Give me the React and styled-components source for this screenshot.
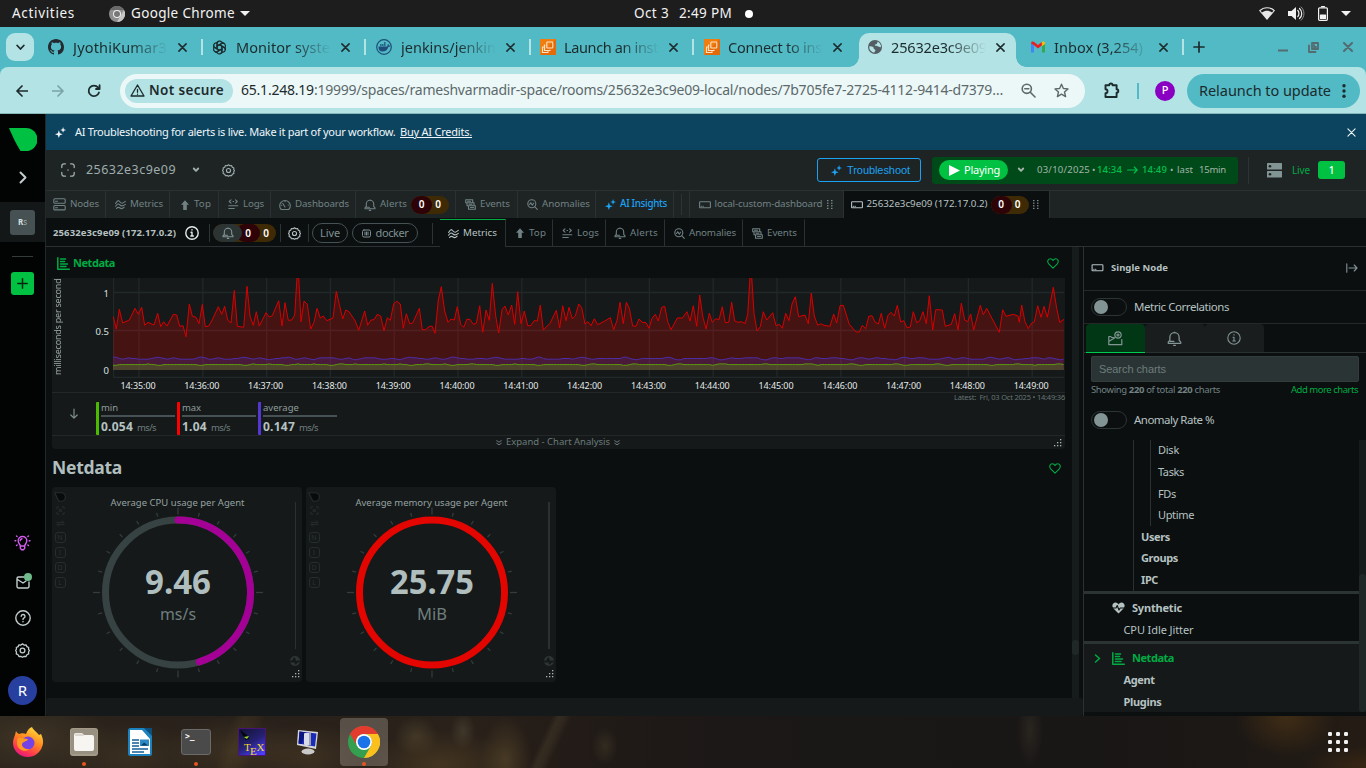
import React, { useLayoutEffect, useRef } from 'react';
import styled, { createGlobalStyle, css } from 'styled-components';

const Global = createGlobalStyle`
  * { box-sizing: border-box; }
  html, body { margin: 0; background: #0b0f10; }
  body { width: 1366px; height: 768px; overflow: hidden; font-family: "Noto Sans", "Open Sans", sans-serif; }
  svg { display: block; flex: none; }
`;

/* ---------- text ---------- */

const Label = styled.span`
  flex: none;
  display: inline-block;
  white-space: pre;
  line-height: 1.3;
  font-size: ${p => p.$s || 10}px;
  font-weight: ${p => p.$b || 400};
  color: ${p => p.$c || 'inherit'};
  margin-left: ${p => p.$ml || 0}px;
  ${p => p.$mb && css`margin-bottom: ${p.$mb}px;`}
  ${p => p.$sans && css`font-family: "Liberation Sans", sans-serif;`}
  ${p => p.$u && css`text-decoration: underline;`}
`;

/* Tracks its letters so that the run fills exactly w pixels. */
function Fit({ w, children, ...rest }) {
  const ref = useRef(null);
  useLayoutEffect(() => {
    const el = ref.current;
    const apply = () => {
      el.style.letterSpacing = '0px';
      const natural = el.getBoundingClientRect().width;
      const n = el.textContent.length;
      el.style.letterSpacing = (w - natural) / n + 'px';
    };
    apply();
    if (document.fonts) document.fonts.ready.then(apply);
  }, [w]);
  return <Label ref={ref} {...rest}>{children}</Label>;
}

/* ---------- icons ---------- */

const Svg = ({ w = 12, h, box = '0 0 24 24', sw = 2, fill = 'none', children, className }) => (
  <svg className={className} width={w} height={h || w} viewBox={box} fill={fill} stroke={fill === 'none' ? 'currentColor' : 'none'} strokeWidth={sw} strokeLinecap="round" strokeLinejoin="round">{children}</svg>
);
const Close = ({ w = 9, sw = 1.6 }) => <Svg w={w} box="0 0 10 10" sw={sw}><path d="M1 1l8 8M9 1l-8 8" /></Svg>;
const NodesIcon = () => <Svg w={13} box="0 0 13 13" sw={1.1}><rect x=".8" y=".8" width="11.4" height="4.4" rx="1" /><rect x=".8" y="7.5" width="11.4" height="4.4" rx="1" /><path d="M2.5 3.2h2M2.5 9.8h2" /></Svg>;
const MetricsIcon = () => <Svg w={11} box="0 0 11 11" sw={1.1}><path d="M.6 4.5C2.500 1 3.400 1 5 3s2.800 1.500 5.300-.6M.6 7.200C2.500 4.500 3.400 4.500 5 6s3 1.200 5.300-.6M1.500 9.500c1.500-1.800 2.300-1.500 3.600-.5s2.500.8 4-.8" /></Svg>;
const TopIcon = () => <Svg w={10} box="0 0 10 10" fill="currentColor"><path d="M5 .3L9 4.800H6.800V10H3.200V4.800H1z" /></Svg>;
const LogsIcon = () => <Svg w={11} box="0 0 11 11" sw={1.1}><path d="M3 .8L1.200 2.500 3 4.200M7.500.8L9.300 2.500 7.500 4.200M5 2.500h.6M.8 6.800h9M.8 9.500h5.500" /></Svg>;
const DashIcon = () => <Svg w={12} box="0 0 12 12" sw={1.1}><path d="M2.200 10.500A5.300 5.300 0 1 1 9.800 10.500zM6 8L3.800 4.500M6 2.500v.3M9.200 6h.2M2.500 6.300h.2" /></Svg>;
const Bell = ({ w = 12, sw = 1.1 }) => <Svg w={w} box="0 0 12 12" sw={sw}><path d="M1 9.800V8.900L2.300 7.400V5a3.700 3.700 0 0 1 7.400 0v2.400L11 8.900v.9zM2.600 8.300H5.500M5.300 11.400h1.400M5.700 1h.6" /></Svg>;
const EventsIcon = () => <Svg w={11} box="0 0 11 11" sw={1.1}><path d="M.7.7h7v3h-7zM2 3.700v3h7v-3H7.700M3.500 7v3.300h6.800V6.800H9M2.500 2.200h3M4 5.300h3M5.500 8.500h3" /></Svg>;
const AnomIcon = () => <Svg w={11} box="0 0 11 11" sw={1.1}><circle cx="4.800" cy="4.800" r="4" /><path d="M7.900 7.900l2.400 2.400M2.500 5.500l1.300-1.800 1.500 2.500 1.200-2" /></Svg>;
const Sparkle = ({ w = 11 }) => <Svg w={w} box="0 0 12 12" fill="currentColor"><path d="M4.200 3.500L5.300 6.700 8.400 7.800 5.300 8.900 4.200 12 3.100 8.900 0 7.800 3.100 6.700zM8.800 0l.8 2.400 2.400.8-2.400.8-.8 2.400L8 4l-2.200-.8L8 2.400z" /></Svg>;
const NodeIcon = ({ w = 12 }) => <Svg w={w} h={8} box="0 0 12 8" sw={1.1}><rect x=".6" y=".8" width="10.800" height="6" rx=".6" /><path d="M2.200 5.200h.4M4 5.200h.4" /></Svg>;
const Caret = ({ w = 8 }) => <Svg w={w} h={6} box="0 0 8 6" sw={1.9}><path d="M1.800 1.500L4 3.800l2.200-2.300" /></Svg>;
const Gear = ({ w = 14 }) => <Svg w={w} box="0 0 14 14" sw={1.2}><path d="M7 .8l1.500 1.100 1.800-.2.800 1.700 1.700.8-.2 1.800L13.500 7l-.9 1.400.2 1.800-1.700.8-.8 1.600-1.800-.1L7 13.300l-1.500-.8-1.800.1-.8-1.600-1.700-.8.2-1.800L.6 7l.8-1.400-.2-1.400 1.700-.8.800-1.700 1.800.2z" /><circle cx="7" cy="7" r="2.200" /></Svg>;
const Info = ({ w = 14, sw = 1.2 }) => <Svg w={w} box="0 0 14 14" sw={sw}><circle cx="7" cy="7" r="6.200" /><path d="M7 3.600v.4M6 6.300h1v3.500M5.800 10h2.600" /></Svg>;
const ChartIcon = () => <Svg w={13} box="0 0 13 13" sw={1.5}><path d="M.8.8v11.400h11.500M3.500 1.900h5M3.500 4.500h4M3.500 7h7M3.500 9.600h5.500" /></Svg>;
const Heart = () => <Svg w={12} h={11} box="0 0 13 12" sw={1.2}><path d="M6.500 11L1.800 6.300C-.5 3.500 1.500.8 3.600.8 5 .8 6 1.700 6.500 2.800 7 1.700 8 .8 9.400.8c2.100 0 4.100 2.700 1.800 5.500z" /></Svg>;
const Grip = () => <Svg w={6} h={9} box="0 0 6 9" fill="#7d8c8e">{[0, 2.600, 5.200, 7.800].map(y => <g key={y}><rect x="0" y={y} width="1.500" height="1.200" /><rect x="4" y={y} width="1.500" height="1.200" /></g>)}</Svg>;
const Corner = () => <Svg w={9} h={9} box="0 0 9 9" fill="#a9b5b5">{[[7, 0], [7, 3], [4, 3], [7, 6], [4, 6], [1, 6]].map(([x, y], i) => <rect key={i} x={x} y={y + 1} width="1.300" height="1.300" />)}</Svg>;
const Logo = ({ w, h, fill }) => <Svg w={w} h={h} box="0 0 28 23" fill={fill}><path d="M0 0h17a11.300 11.300 0 0 1 0 23h-5.500C7 16 3.500 8 0 0z" /></Svg>;

/* ---------- desktop frame ---------- */

const Screen = styled.div`width: 1366px; height: 768px; display: flex; flex-direction: column; overflow: hidden;`;
const TopBar = styled.div`
  height: 27px; flex: none; background: #1d1d1d; color: #f2f2f2; display: flex; align-items: center; padding-left: 12px;
`;
const Gap = styled.i`flex: none; width: ${p => p.$w || 1}px; height: ${p => p.$h || 1}px;`;
const ArrowDown = styled.i`flex: none; border: 5px solid transparent; border-top-color: #f2f2f2; border-bottom: 0; margin-left: ${p => p.$ml}px;`;
const Dot = styled.i`flex: none; width: 8px; height: 8px; border-radius: 50%; background: #fff; margin-left: 13px;`;

const TabStrip = styled.div`height: 40px; flex: none; background: #52bac5; display: flex; align-items: center; padding-left: 6px; color: #1c2b2d;`;
const TabSearch = styled.div`width: 28px; height: 28px; border-radius: 9px; background: #b3e3e5; display: grid; place-items: center; margin-right: 6px;`;
const BrowserTab = styled.div`
  position: relative; flex: none; width: ${p => p.$w}px; height: 40px; display: flex; align-items: center; padding-left: 8px;
  ${p => p.$on && css`
    &::before { content: ""; position: absolute; z-index: 0; left: 0; right: 6px; top: 6px; bottom: 0; background: #b3e3e5; border-radius: 10px 10px 0 0; }
    &::after { content: ""; position: absolute; z-index: 0; left: -10px; right: -4px; bottom: 0; height: 10px;
      background: radial-gradient(circle at 0 0, transparent 9.500px, #b3e3e5 10px) left / 10px 10px no-repeat, radial-gradient(circle at 100% 0, transparent 9.500px, #b3e3e5 10px) right / 10px 10px no-repeat; }
  `}
  > * { z-index: 1; }
`;
const TabTitle = styled.div`width: 98px; margin: 0 0 1px ${p => p.$ml || 9}px; -webkit-mask-image: linear-gradient(90deg, #000 58%, transparent 97%); mask-image: linear-gradient(90deg, #000 58%, transparent 97%);`;
const TabX = styled.div`margin-left: 7px; width: 9px;`;
const TabSep = styled.i`width: 2px; height: 16px; background: #b3e3e5; margin-left: 14px;`;

const Toolbar = styled.div`height: 47px; background: linear-gradient(#b3e3e5 46px, #86b6b9 46px); display: flex; align-items: center; padding-left: 16px; color: #1c2b2d; border-radius: 8px 8px 0 0;`;
const ToolbarWrap = styled.div`background: #52bac5; flex: none;`;
const Omnibox = styled.div`width: 965px; height: 34px; border-radius: 17px; background: #ecf8f8; margin-left: 18px; display: flex; align-items: center; padding-left: 5px; color: #5c696b;`;
const Chip = styled.div`width: 108px; height: 24px; border-radius: 12px; background: #b3e3e5; color: #1c2b2d; display: flex; align-items: center; padding-left: 5px; gap: 4px;`;
const ToolSep = styled.i`width: 2px; height: 16px; background: #52bac5; margin-left: 17px;`;
const Profile = styled.div`width: 20px; height: 20px; border-radius: 50%; background: #8a00c2; color: #fff; display: grid; place-items: center; margin-left: 16px;`;
const Relaunch = styled.div`width: 173px; height: 34px; border-radius: 17px; background: #52bac5; margin-left: 12px; padding-left: 12px; display: flex; align-items: center; gap: 11px;`;

/* ---------- app frame ---------- */

const Page = styled.div`height: 602px; flex: none; display: flex; overflow: hidden; background: #0b0f10;`;
const Side = styled.div`width: 46px; flex: none; background: #020404; border-right: 1px solid #23292a; display: flex; flex-direction: column; align-items: center; color: #c3cdcd; padding-top: 14px;`;
const SideIcon = styled.div`margin-top: ${p => p.$mt}px; color: ${p => p.$c || 'inherit'}; position: relative;`;
const SpaceRow = styled.div`width: 45px; height: 40px; background: #131717; margin-top: 18px; display: grid; place-items: center;`;
const Space = styled.div`width: 25px; height: 25px; border-radius: 3px; background: #455152; display: grid; place-items: center;`;
const SideLine = styled.i`width: 21px; height: 1px; background: #353b3b; margin-top: 14px;`;
const Plus = styled.div`width: 23px; height: 23px; border-radius: 3px; background: #00c142; color: #04250e; display: grid; place-items: center; margin-top: 15px;`;
const Avatar = styled.div`width: 29px; height: 29px; border-radius: 50%; background: #273f9f; color: #fff; display: grid; place-items: center; margin-top: 18px;`;
const MailBadge = styled.i`position: absolute; right: -1px; top: -1px; width: 8px; height: 8px; border-radius: 50%; background: #6fb98a;`;

const Body = styled.div`flex: none; width: 1320px; display: flex; flex-direction: column;`;
const Banner = styled.div`height: 36px; flex: none; background: #0c4460; color: #f1f6f8; display: flex; align-items: center; padding-left: 9px;`;
const HeaderRow = styled.div`height: 40px; flex: none; background: #1e2424; display: flex; align-items: center; padding-left: 15px; color: #9fadad;`;
const Trouble = styled.div`width: 104px; height: 24px; border: 1px solid #1da1f2; border-radius: 3px; color: #1da1f2; display: flex; align-items: center; padding-left: 13px; gap: 5px; margin-left: 582px;`;
const TimeBox = styled.div`width: 306px; height: 27px; border-radius: 3px; background: #004a1a; display: flex; align-items: center; margin-left: 11px; padding-left: 7px; color: #a3b5a8;`;
const Playing = styled.div`width: 69px; height: 20px; border-radius: 10px; background: #00c142; color: #fff; display: flex; align-items: center; padding-left: 10px; gap: 4px;`;
const HLine = styled.i`flex: none; width: 1px; height: ${p => p.$h || 27}px; background: #2d3435; margin-left: ${p => p.$ml || 0}px;`;
const LiveCount = styled.div`width: 27px; height: 18px; border-radius: 3px; background: #00c142; color: #fff; display: grid; place-items: center; margin-left: 8px;`;

const TabRow = styled.div`height: 28px; flex: none; background: #1e2424; border-top: 1px solid #2b3132; display: flex; color: #708183;`;
const SubRow = styled.div`height: 29px; flex: none; background: #0b0f10; border-bottom: 1px solid #2b3132; display: flex; align-items: center; padding: 2px 0 0 7px; color: #708183;`;
const SubTabs = styled.div`display: flex; height: 28px; margin-top: -1px;`;
const NavTab = styled.div`
  flex: none; height: 100%; width: ${p => p.$w}px; padding-left: ${p => p.$pl || 8}px; display: flex; align-items: center; gap: 4px; border-right: 1px solid #2b3132;
  ${p => p.$on && css`background: #0b0f10; color: #b6c2c2;`}
  ${p => p.$sub && css`border-top: 1px solid ${p.$on ? '#00ab44' : 'transparent'};`}
  ${p => p.$c && css`color: ${p.$c};`}
`;
const IconCell = styled.div`width: ${p => p.$w || 11}px; flex: none; display: grid; place-items: center;`;
const Counts = styled.div`flex: none; display: flex; height: 18px; width: ${p => p.$w || 38}px; border-radius: 9px; background: #3f2a06; color: #fff; align-items: center; overflow: hidden; margin-left: ${p => p.$ml || 0}px;`;
const Count = styled.div`flex: none; position: relative; z-index: ${p => p.$z || 0}; height: 18px; width: ${p => p.$w || 21}px; margin-left: ${p => p.$ml || 0}px; border-radius: 9px; background: ${p => p.$bg || 'transparent'}; display: grid; place-items: center;`;
const Pill = styled.div`width: ${p => p.$w}px; height: 20px; border: 1px solid #455152; border-radius: 10px; margin-left: ${p => p.$ml}px; display: flex; align-items: center; justify-content: center; gap: 5px; color: #7f8f91;`;

const Main = styled.div`flex: 1; display: flex; min-height: 0;`;
const Content = styled.div`width: 1026px; flex: none; height: 451px; overflow: hidden; padding-left: 6px;`;
const LeftPane = styled.div`width: 1037px; flex: none; display: flex; flex-wrap: wrap; align-content: flex-start;`;
const ScrollTrack = styled.div`width: 7px; height: 451px; background: #161b1b; padding-top: 393px; &::after { content: ""; display: block; height: 15px; border-radius: 3px; background: #1f2727; }`;
const BottomBand = styled.div`width: 1037px; height: 18px; background: #151919; border-radius: 3px;`;

const SectionHead = styled.div`height: ${p => p.$h}px; width: 1013px; display: flex; align-items: center; color: ${p => p.$c}; padding: ${p => p.$pt || 0}px ${p => p.$pr || 5}px 0 ${p => p.$pl || 0}px;`;
const Push = styled.i`flex: 1;`;
const ChartCard = styled.div`width: 1013px; height: 171px; background: #151919; border-radius: 0 0 4px 4px; display: flex; flex-direction: column;`;
const PlotRow = styled.div`height: 115px; flex: none; display: flex; border-bottom: 1px solid #222828;`;
const AxisTitle = styled.div`width: 12px; height: 97px; writing-mode: vertical-rl; transform: rotate(180deg); color: #9aa6a6; display: flex; align-items: center; line-height: 12px;`;
const VText = styled.span`font-size: 9px; line-height: 12px; white-space: nowrap; letter-spacing: -.22px;`;
const YAxis = styled.div`width: 49px; display: flex; flex-direction: column; align-items: flex-end; padding: 10px 4px 0 0; gap: 26px; color: #dbe1e1;`;
const PlotCol = styled.div`width: 952px;`;
const XAxis = styled.div`display: flex; gap: 28.800px; margin-left: 7.500px; height: 14px; color: #e4eaea; padding-top: 2px;`;
const LegendRow = styled.div`height: 43px; flex: none; border-bottom: 1px solid #222828; display: flex; padding: 9px 0 0 17px; color: #7d8c8c;`;
const Dim = styled.div`width: 78px; height: 33px; border-left: 3px solid ${p => p.$c}; border-radius: 1px; margin-right: 3px; padding-left: 2px; display: flex; flex-direction: column;`;
const DimBar = styled.i`height: 2px; width: 74px; background: #455152; margin: 1px 0 2px; flex: none;`;
const DimName = styled.div`height: 12px; padding-top: 1px; line-height: 11px; display: flex; align-items: center; color: #8f9d9d;`;
const DimVal = styled.div`height: 15px; display: flex; align-items: baseline; gap: 4px; color: #b6c2c2;`;
const Latest = styled.div`margin: -9px 0 0 auto; display: flex; align-items: flex-start; color: #657575;`;
const Expand = styled.div`flex: 1; display: flex; align-items: center; color: #6b7b7b; padding: 0 3px 0 444px; gap: 4px;`;

const Gauges = styled.div`display: flex; gap: 4px;`;
const GaugeCard = styled.div`width: 250px; height: 195px; background: #151919; border-radius: 4px; display: flex;`;
const Tools = styled.div`width: 14px; padding: 5px 0 0 2px; display: flex; flex-direction: column; gap: 4px; color: #293030; align-items: center;`;
const ToolBox = styled.div`width: 11px; height: 11px; border: 1px solid #262d2d; border-radius: 3px; display: grid; place-items: center; color: #2a3131;`;
const GaugeMain = styled.div`width: 223px; display: flex; flex-direction: column; align-items: center; padding-top: 9.500px; color: #96a3a3; > svg { margin-top: -3px; }`;
const GaugeSide = styled.div`width: 12px; display: flex; flex-direction: column; align-items: center; padding-top: 15px;`;
const VLine = styled.i`width: ${p => p.$w}px; height: 147px; background: #2a3131;`;
const NextTitle = styled.div`margin-top: 12.500px; display: flex; color: #b6c2c2;`;

const Panel = styled.div`width: 283px; flex: none; border-left: 1px solid #2b3132; display: flex; flex-direction: column; color: #b6c2c2;`;
const PanelHead = styled.div`height: 44px; flex: none; display: flex; align-items: center; padding: 0 8px 1px 7px; border-bottom: 1px solid #23292a;`;
const SwitchRow = styled.div`height: ${p => p.$h}px; flex: none; display: flex; align-items: center; padding: ${p => p.$pt || 0}px 0 0 7px; border-bottom: ${p => (p.$line ? '1px solid #23292a' : '0')};`;
const Toggle = styled.div`width: 36px; height: 18px; border: 1px solid #2c3434; border-radius: 9px; padding: 1px 2px; &::after { content: ""; display: block; width: 14px; height: 14px; border-radius: 50%; background: #829494; }`;
const PanelTabs = styled.div`height: 29px; flex: none; display: flex; padding-left: 2px; border-bottom: 1px solid #2b3132;`;
const PanelTab = styled.div`width: ${p => p.$w || 59}px; height: 29px; background: ${p => (p.$on ? '#023715' : '#191d1e')}; border-bottom: 1px solid ${p => (p.$on ? '#00cb51' : '#2b3132')}; border-radius: 4px 4px 0 0; display: grid; place-items: center; color: #829494; padding-right: 1px;`;
const Search = styled.div`width: 268px; height: 26px; flex: none; margin: 3px 0 0 7px; background: #2b3434; border: 1px solid #323c3c; border-radius: 2px; display: flex; align-items: center; padding-left: 7px; color: #6c7c7c;`;
const CountRow = styled.div`height: 16px; flex: none; width: 267px; margin-left: 7px; display: flex; align-items: center; justify-content: space-between; color: #728282;`;
const Menu = styled.div`display: flex; flex: none; height: 276px;`;
const MenuList = styled.div`width: 275px; display: flex; flex-direction: column;`;
const Outer = styled.div`margin-left: 49px; border-left: 1px solid #2b3132; height: 151px; padding-left: 7px;`;
const Inner = styled.div`margin-left: 9px; border-left: 1px solid #2b3132; height: 86px; padding-left: 7px;`;
const Item = styled.div`height: ${p => p.$h || 21.6}px; display: flex; align-items: center; padding-left: ${p => p.$pl || 0}px; gap: 7px; color: ${p => p.$c || 'inherit'};`;
const Chevron = styled.span`flex: none; width: 11px;`;
const Group = styled.div`border-top: 3px solid #2b3333; height: ${p => p.$h}px; padding-top: ${p => p.$pt}px; background: ${p => p.$bg || 'transparent'};`;
const MenuScroll = styled.div`width: 7px; background: #161b1b; padding-top: 134px; margin-bottom: 4px; &::after { content: ""; display: block; height: 138px; border-radius: 3px; background: #1f2727; }`;

const Dock = styled.div`
  height: 52px; flex: none; display: flex; align-items: center; padding-left: 4px; gap: 8px;
  background:
    linear-gradient(115deg, transparent 40%, rgba(84, 74, 50, .34) 47%, rgba(84, 74, 50, .26) 53%, transparent 60%) 512px 0 / 76px 52px no-repeat,
    linear-gradient(110deg, transparent 38%, rgba(100, 78, 42, .2) 47%, rgba(100, 78, 42, .16) 54%, transparent 62%) 180px 0 / 120px 52px no-repeat,
    radial-gradient(ellipse 22px 20px at 416px 20px, rgba(100, 88, 56, .4), transparent),
    radial-gradient(ellipse 13px 18px at 463px 15px, rgba(100, 94, 68, .36), transparent),
    radial-gradient(ellipse 26px 44px at 506px 44px, rgba(100, 82, 46, .5), transparent),
    radial-gradient(ellipse 76px 34px at 440px 48px, rgba(92, 72, 38, .5), transparent),
    radial-gradient(ellipse 13px 19px at 605px 30px, rgba(74, 68, 46, .4), transparent),
    radial-gradient(ellipse 13px 36px at 1030px 14px, rgba(56, 54, 40, .5), transparent),
    radial-gradient(ellipse 80px 40px at 32px 22px, rgba(90, 74, 50, .42), transparent),
    radial-gradient(ellipse 80px 34px at 130px 40px, rgba(82, 66, 40, .4), transparent),
    radial-gradient(ellipse 70px 34px at 235px 34px, rgba(88, 72, 44, .42), transparent),
    radial-gradient(ellipse 60px 34px at 310px 40px, rgba(90, 72, 42, .4), transparent),
    radial-gradient(ellipse 50px 38px at 1286px 2px, rgba(84, 56, 22, .6), transparent),
    radial-gradient(ellipse 60px 20px at 1366px 50px, rgba(76, 48, 20, .5), transparent),
    linear-gradient(90deg, #2b241c, #28201a 18%, #2a211a 34%, #241c17 40%, #1e1917 48%, #1a1717 60%, #191616 80%, #1c1815 90%, #241c14);
`;
const DockItem = styled.div`
  position: relative; width: 48px; height: 48px; border-radius: 4px; display: grid; place-items: center; flex: none;
  background: ${p => (p.$on ? 'rgba(200, 190, 175, .3)' : 'transparent')};
  ${p => p.$run && css`&::after { content: ""; position: absolute; left: 22px; bottom: 0; width: 4px; height: 4px; border-radius: 50%; background: #e95420; }`}
`;

/* ---------- data ---------- */

const left = '340,215 349,252 358,193 368,234 388,225 405,190 415,208 425,187 434,241 444,232 462,240 473,205 482,245 491,230 501,243 520,208 530,210 539,244 549,242 558,275 568,177 577,213 588,217 597,236 607,178 616,245 626,243 635,228 655,185 665,208 674,184 683,225 693,234 703,136 712,244 731,247 741,124 750,213 760,241 769,200 778,243 798,203 808,216 817,212 836,167 846,243 855,173 865,226 875,225 884,210 891,96 896,96 903,230 912,168 922,178 932,252 942,232 951,190 961,219 970,213 980,227 999,219 1009,139 1018,178 1028,222 1037,195 1047,200 1066,228 1076,256 1094,198 1103,241';
const mid = '3,225 12,224 22,208 32,213 42,257 52,218 61,226 71,176 80,169 91,177 100,250 109,206 119,236 128,234 148,190 157,254 166,254 177,245 186,243 195,265 205,165 214,125 224,198 234,232 243,222 253,225 262,185 272,238 281,247 291,222 301,224 310,238 319,235 329,182 338,262 348,195 358,226 367,115 377,213 386,264 396,194 405,183 415,210 425,180 434,238 443,140 453,236 463,198 473,242 482,242 492,227 502,228 511,180 520,255 540,235 559,196 569,249 578,182 588,227 597,187 607,221 616,213 626,177 635,188 645,237 654,230 663,242 673,221 683,239 703,229 721,218 731,254 741,226 750,172 760,236 769,172 778,190 788,243 798,244 807,222 817,232 828,233 837,250 846,220 856,208 865,228 875,187 884,184 893,230 903,254 922,219 937,219 951,200 960,228 970,182 980,244 989,150 998,213 1008,252 1018,205 1027,232 1037,221 1047,224';
const right = '7,185 16,233 26,232 35,172 44,228 54,232 64,230 75,236 83,208 90,96 95,96 102,205 111,258 121,245 130,200 140,225 158,203 168,242 178,238 187,250 197,205 207,227 216,177 226,155 236,215 255,210 265,236 274,144 283,213 293,241 302,236 312,241 330,244 341,207 350,234 360,182 370,181 388,238 408,261 418,261 427,241 437,251 446,214 456,212 465,231 475,237 484,205 494,250 504,211 513,202 523,213 532,181 542,231 551,227 561,248 571,246 580,200 590,233 599,227 609,200 619,236 628,152 638,255 647,194 667,195 676,244 694,238 704,206 714,255 724,175 734,225 743,230 752,207 761,255 781,181 790,209 800,190 838,262 848,194 858,214 880,208 894,213 898,232 905,180 915,230 925,251 935,234 943,231 953,182 963,217 972,184 982,217 1000,127 1010,190 1019,232 1032,223';
const decode = (s, off) => s.split(' ').map(p => { const [x, y] = p.split(',').map(Number); return [(x + off) / 3 - 113, (y - 99) / 3]; });
const maxPts = [...decode(left, 0), ...decode(mid, 1110), ...decode(right, 2160)];
const wave = (base, amp, seed) => Array.from({ length: 299 }, (_, i) => {
  const v = Math.sin(i * 0.71 + seed) * Math.sin(i * 0.23 + seed * 2) + Math.sin(i * 1.37 + seed) * 0.4;
  return [i * 3.19, base - Math.round(v * amp * 1.5) / 1.5];
});
const avgPts = wave(80.5, 1.1, 1);
const minPts = wave(86.6, 0.5, 4);
const line = pts => pts.map(p => p.map(n => n.toFixed(1)).join(',')).join(' ');
const area = pts => `0,92 ${line(pts)} 951,92`;

function Plot() {
  const xs = Array.from({ length: 15 }, (_, i) => 26 + i * 63.800);
  return (
    <svg width="952" height="100" viewBox="0 0 952 100">
      <g stroke="#222829" strokeWidth="1.300">
        <path d="M.5 0V99M0 14.500H951M0 52.500H951M0 99.500H951" />
        {xs.map(x => <path key={x} d={`M${x} 0V99`} />)}
      </g>
      <polygon points={area(maxPts)} fill="#ff0000" fillOpacity=".21" />
      <polygon points={area(avgPts)} fill="#5a36d8" fillOpacity=".2" />
      <polygon points={area(minPts)} fill="#5ccc00" fillOpacity=".23" />
      <g fill="none" strokeWidth="1">
        <polyline points={line(maxPts)} stroke="#d90000" />
        <polyline points={line(avgPts)} stroke="#4c2ea8" />
        <polyline points={line(minPts)} stroke="#5c9a0a" />
      </g>
    </svg>
  );
}

function GaugeFace({ value, unit, color, full, vw, uw }) {
  const r = 72.500, a = (163 * Math.PI) / 180;
  const ticks = Array.from({ length: 24 }, (_, i) => i);
  return (
    <svg width="174" height="172" viewBox="-87 -86.500 174 172">
      <g stroke="#343c3c" strokeWidth="1.300">
        {ticks.map(i => <path key={i} d={`M0 ${i % 6 ? -78.500 : -78}V${i % 6 ? -82.500 : -85}`} transform={`rotate(${i * 15})`} />)}
      </g>
      <circle r={r} fill="none" stroke={full ? color : '#374242'} strokeWidth="7" />
      {!full && <path d={`M0 ${-r}A${r} ${r} 0 0 1 ${r * Math.sin(a)} ${-r * Math.cos(a)}`} fill="none" stroke={color} strokeWidth="7" strokeLinecap="round" />}
      <text y="1.300" textAnchor="middle" textLength={vw} lengthAdjust="spacingAndGlyphs" fontSize="33.500" fontWeight="700" fill="#b0bebe">{value}</text>
      <text y="27.500" textAnchor="middle" textLength={uw} lengthAdjust="spacingAndGlyphs" fontSize="16.500" fill="#6f7f7f">{unit}</text>
    </svg>
  );
}

function Gauge({ title, tw, sw, ...face }) {
  return (
    <GaugeCard>
      <Tools>
        <Svg w={12} h={10} box="-2 -2 32 27" fill="#080b0c"><path d="M0 0h17a11.300 11.300 0 0 1 0 23h-5.500C7 16 3.500 8 0 0z" stroke="#262d2d" strokeWidth="3" /></Svg>
        <Svg w={9} box="0 0 10 10" sw={1}><path d="M3 1H1v2M7 1h2v2M9 7v2H7M1 7v2h2M4 4h2v2H4z" /></Svg>
        <Svg w={9} box="0 0 10 10" sw={1}><path d="M1 4h8L7 2M9 6H1l2 2" /></Svg>
        {['N', 'I', 'D', 'L'].map(t => <ToolBox key={t}><Label $s={7}>{t}</Label></ToolBox>)}
      </Tools>
      <GaugeMain>
        <Fit w={tw} $s={9.500}>{title}</Fit>
        <GaugeFace {...face} />
      </GaugeMain>
      <GaugeSide>
        <VLine $w={sw} />
        <Gap $h={7} />
        <Svg w={10} box="0 0 10 10" fill="#2d3535"><circle cx="5" cy="5" r="5" /><path d="M1 5.500h2l1.300-3 1.400 5L7 5.500h2" stroke="#151919" fill="none" /></Svg>
        <Gap $h={3} />
        <Corner />
      </GaugeSide>
    </GaugeCard>
  );
}

/* ---------- favicons ---------- */

const Github = () => <Svg w={16} box="0 0 16 16" fill="#24292f"><path d="M8 0C3.580 0 0 3.580 0 8c0 3.540 2.290 6.530 5.470 7.590.4.070.55-.17.55-.38 0-.19-.01-.82-.01-1.490-2.010.37-2.530-.49-2.690-.94-.09-.23-.48-.94-.82-1.130-.28-.15-.68-.52-.01-.53.63-.01 1.080.58 1.230.82.72 1.210 1.870.87 2.330.66.070-.52.28-.87.51-1.070-1.780-.2-3.640-.89-3.640-3.950 0-.87.31-1.590.82-2.150-.08-.2-.36-1.020.08-2.120 0 0 .67-.21 2.200.82.64-.18 1.320-.27 2-.27s1.360.09 2 .27c1.530-1.040 2.200-.82 2.200-.82.44 1.100.16 1.920.08 2.120.51.56.82 1.270.82 2.150 0 3.070-1.870 3.750-3.650 3.950.29.25.54.73.54 1.480 0 1.070-.01 1.930-.01 2.200 0 .21.15.46.55.38A8.010 8.010 0 0 0 16 8c0-4.420-3.580-8-8-8z" /></Svg>;
const Openai = () => <Svg w={15} box="-8 -8 16 16" sw={1.300}>{[0, 60, 120, 180, 240, 300].map(a => <path key={a} transform={`rotate(${a})`} d="M-2.600 1.500V-4.300A2.700 2.700 0 0 1 2.300-5.700L5-4.200M-2.600-1.500L2.400-4.300" />)}</Svg>;
const Docker = () => <Svg w={16} box="0 0 16 16" fill="#1d4d78"><circle cx="8" cy="8" r="7.300" fill="none" stroke="#1d4d78" strokeWidth="1.200" /><path d="M2.500 7.500h8.500c.6-.2.800-1 .4-1.800l.7-.7c.6.500.8 1 .8 1.500.6-.2 1.200 0 1.500.300-.4.900-1.200 1.100-2 1.100-1 3-3 4.600-5.900 4.600-2.700 0-4.200-1.800-4-5zM4 5.200h1.600v1.600H4zM6 5.200h1.600v1.600H6zM8 5.200h1.600v1.600H8zM8 3.200h1.600v1.600H8z" /></Svg>;
const Aws = () => <Svg w={16} box="0 0 16 16" fill="#f07d10"><rect width="16" height="16" /><path d="M0 16L16 0v16z" fill="#e46a0a" /><g fill="none" stroke="#ffe3c2" strokeWidth="1.100"><rect x="6.800" y="3" width="6" height="6" rx=".8" /><path d="M5 6H4.500v5.500H10V11M3.500 8H2.500v5.500H8v-1" /></g></Svg>;
const Globe = () => <Svg w={16} box="0 0 16 16" fill="#545d63"><circle cx="8" cy="8" r="7" /><path d="M2.300 7.200c1.700 0 3.200.1 4.200 1.200.7.800-.2 1.400.8 1.800 1 .3 1.400.8 1 1.600-.3.700-.9 1-1 2A6 6 0 0 1 2.300 7.200zM10.500 2.500c2.200.9 3.600 3 3.500 5.500-.7.600-1.300-.3-2.200-.2-1 0-1.200-.8-2-1s-2 .2-2-.6 1.200-.7 1.800-1.200c.7-.7.900-1.700.9-2.500z" fill="#b3e3e5" /></Svg>;
const Gmail = () => <Svg w={16} box="0 0 16 16" fill="#4285f4"><path d="M1 13.500V4l3 2.300v7.200z" /><path d="M12 13.500V6.300L15 4v9.500z" fill="#34a853" /><path d="M1 4.300C1 2.500 3 2 4.200 3L8 6l3.800-3 .2 3.300-4 3.100-4-3.100z" fill="#ea2020" /><path d="M11.800 3C13 2 15 2.500 15 4.300V5l-3 2.200z" fill="#fbbc04" /></Svg>;

const browserTabs = [
  { icon: <Github />, t: 'JyothiKumar3', w: 94, tw: 164 },
  { icon: <Openai />, t: 'Monitor syste', w: 94, tw: 164 },
  { icon: <Docker />, t: 'jenkins/jenkin', w: 95, tw: 164 },
  { icon: <Aws />, t: 'Launch an inst', w: 94, tw: 164, ml: 8 },
  { icon: <Aws />, t: 'Connect to ins', w: 94, tw: 163, ml: 8, nosep: true },
  { icon: <Globe />, t: '25632e3c9e09', w: 96, tw: 163, ml: 8, on: true },
  { icon: <Gmail />, t: 'Inbox (3,254)', w: 89, tw: 163, ml: 8 },
];

function Browser() {
  return (
    <>
      <TabStrip>
        <TabSearch><Svg w={9} h={7} box="0 0 9 7" sw={1.800}><path d="M1.200 1.500L4.500 5l3.300-3.500" /></Svg></TabSearch>
        {browserTabs.map((b, i) => (
          <BrowserTab key={i} $w={b.tw} $on={b.on}>
            {b.icon}
            <TabTitle $ml={b.ml}><Fit w={b.w} $s={14.500}>{b.t}</Fit></TabTitle>
            <TabX><Close w={9} sw={1.700} /></TabX>
            {!b.nosep && !b.on && <TabSep />}
          </BrowserTab>
        ))}
        <Gap $w={8} />
        <Svg w={12} box="0 0 12 12" sw={1.700}><path d="M6 1v10M1 6h10" /></Svg>
        <Gap $w={73} />
        <Svg w={10} h={10} box="0 0 10 10" sw={1.800}><path d="M0 8.500h10" stroke="#546b70" /></Svg>
        <Gap $w={20} />
        <Svg w={11} box="0 0 11 11" sw={1.800}><path d="M4 1h6v6H4zM1 3.500V10h6.500M6 3v2h2" stroke="#546b70" /></Svg>
        <Gap $w={24} />
        <Svg w={10} box="0 0 10 10" sw={2}><path d="M1 1l8 8M9 1l-8 8" stroke="#546b70" /></Svg>
      </TabStrip>
      <ToolbarWrap>
        <Toolbar>
          <Svg w={12} box="0 0 12 12" sw={1.700}><path d="M6 1L1 6l5 5M1 6h10.500" /></Svg>
          <Gap $w={24} />
          <Svg w={12} box="0 0 12 12" sw={1.700}><path d="M6 1l5 5-5 5M11 6H.5" stroke="#7ba4a7" /></Svg>
          <Gap $w={23} />
          <Svg w={14} box="0 0 14 14" sw={1.800}><path d="M12 8.500A5.300 5.300 0 1 1 11 3.400L12.500 5M12.600 1.200V5H9" /></Svg>
          <Gap $w={1} />
          <Omnibox>
            <Chip>
              <Svg w={15} box="0 0 15 15" sw={1.300}><path d="M7.500 2L14 13H1zM7.500 6.500v2.800M7.500 11.200v.1" /></Svg>
              <Fit w={75} $s={13.500} $b={600}>Not secure</Fit>
            </Chip>
            <Fit w={762} $s={14} $ml={8}><Label as="span" $s={14} $c="#1c2b2d">65.1.248.19</Label>:19999/spaces/rameshvarmadir-space/rooms/25632e3c9e09-local/nodes/7b705fe7-2725-4112-9414-d7379…</Fit>
            <Gap $w={18} />
            <Svg w={15} box="0 0 15 15" sw={1.600}><circle cx="5.800" cy="5.800" r="4.600" /><path d="M9.300 9.300l4.700 4.700M3.800 5.800h4" /></Svg>
            <Gap $w={18} />
            <Svg w={15} box="0 0 15 15" sw={1.400}><path d="M7.500 1.200l1.900 4.300 4.600.4-3.500 3.100 1.100 4.600-4.100-2.500-4.100 2.500L4.500 9 1 5.900l4.600-.4z" /></Svg>
          </Omnibox>
          <Gap $w={18} />
          <Svg w={17} box="0 0 17 17" sw={1.900}><path d="M2.500 3.200H6.200a1.700 1.700 0 0 1 3.400 0h4V7.200a1.700 1.700 0 0 1 0 3.400V15H2.500v-3.800a2 2 0 0 0 0-4z" /></Svg>
          <ToolSep />
          <Profile><Label $s={11} $b={500}>P</Label></Profile>
          <Relaunch>
            <Fit w={132} $s={14.500}>Relaunch to update</Fit>
            <Svg w={4} h={14} box="0 0 4 14" fill="#1c2b2d"><circle cx="2" cy="1.800" r="1.700" /><circle cx="2" cy="7" r="1.700" /><circle cx="2" cy="12.200" r="1.700" /></Svg>
          </Relaunch>
        </Toolbar>
      </ToolbarWrap>
    </>
  );
}

function Sidebar() {
  return (
    <Side>
      <Logo w={28} h={23} fill="#00c142" />
      <SideIcon $mt={20}><Svg w={8} h={13} box="0 0 8 13" sw={2}><path d="M1.500 1.500L6.500 6.500l-5 5" /></Svg></SideIcon>
      <SpaceRow><Space><Label $s={8} $b={700} $c="#dbe1e1">R<Label $s={8} $b={400} $c="#9fadad">s</Label></Label></Space></SpaceRow>
      <SideLine />
      <Plus><Svg w={11} box="0 0 11 11" sw={1.500}><path d="M5.500.8v9.400M.8 5.500h9.400" /></Svg></Plus>
      <SideIcon $mt={239} $c="#d65cf0"><Svg w={17} box="0 0 17 17" sw={1.400}><path d="M6.300 12c0-1.700-2.100-2.600-2.100-5.200a4.300 4.300 0 0 1 8.600 0c0 2.600-2.100 3.500-2.100 5.200zM6.300 12v2.200l1.200 1.600h2l1.200-1.600V12M6.200 6.500c.2-1 .8-1.600 1.800-1.800M1 6.800h.8M15.200 6.800h.8M2.500 2l.6.500M14.500 2l-.6.500M2.500 11.500l.6-.5M14.500 11.500l-.6-.5" /></Svg></SideIcon>
      <SideIcon $mt={23}><Svg w={16} box="0 0 16 16" sw={1.400}><path d="M9 3H3.500A1.500 1.500 0 0 0 2 4.500v8A1.500 1.500 0 0 0 3.500 14h9a1.500 1.500 0 0 0 1.500-1.500V8M2.500 5.500L8 9l3-2" /></Svg><MailBadge /></SideIcon>
      <SideIcon $mt={20}><Svg w={16} box="0 0 16 16" sw={1.400}><circle cx="8" cy="8" r="7.200" /><path d="M6.200 6.300a1.900 1.900 0 1 1 2.600 1.900c-.6.300-.8.500-.8 1.200M8 11.500v.2" /></Svg></SideIcon>
      <SideIcon $mt={17}><Gear w={15} /></SideIcon>
      <Avatar><Label $s={15}>R</Label></Avatar>
    </Side>
  );
}

const Badges = ({ ml }) => (
  <Counts $ml={ml}>
    <Count $w={21} $bg="#2d0308"><Label $s={10} $b={600}>0</Label></Count>
    <Count $w={12}><Label $s={10} $b={600}>0</Label></Count>
  </Counts>
);

const mainTabs = [
  { t: 'Nodes', w: 60, pl: 7, tw: 29, iw: 13, i: <NodesIcon /> },
  { t: 'Metrics', w: 64, pl: 9, tw: 33, i: <MetricsIcon /> },
  { t: 'Top', w: 49, pl: 9, tw: 17, i: <TopIcon /> },
  { t: 'Logs', w: 52, pl: 9, tw: 21, i: <LogsIcon /> },
  { t: 'Dashboards', w: 85, pl: 8, tw: 54, iw: 12, i: <DashIcon /> },
  { t: 'Alerts', w: 100, pl: 8, tw: 27, iw: 12, i: <Bell />, badge: true },
  { t: 'Events', w: 62, pl: 9, tw: 30, i: <EventsIcon /> },
  { t: 'Anomalies', w: 78, pl: 9, tw: 48, i: <AnomIcon /> },
  { t: 'AI Insights', w: 78, pl: 8, tw: 47, i: <Sparkle />, c: '#1da1f2', iw: 12 },
];
const subTabs = [
  { t: 'Metrics', w: 66, pl: 8, tw: 34, i: <MetricsIcon />, on: true },
  { t: 'Top', w: 47, pl: 8, tw: 17, i: <TopIcon /> },
  { t: 'Logs', w: 53, pl: 9, tw: 22, i: <LogsIcon /> },
  { t: 'Alerts', w: 59, pl: 8, tw: 28, iw: 12, i: <Bell /> },
  { t: 'Anomalies', w: 78, pl: 9, tw: 47, i: <AnomIcon /> },
  { t: 'Events', w: 62, pl: 9, tw: 30, i: <EventsIcon /> },
];

function Header() {
  return (
    <>
      <Banner>
        <Sparkle w={11} />
        <Fit w={323} $s={11} $ml={9}>AI Troubleshooting for alerts is live. Make it part of your workflow. </Fit>
        <Fit w={72} $s={11} $u $ml={2}>Buy AI Credits.</Fit>
        <Gap $w={875} />
        <Close w={9} sw={1.200} />
      </Banner>
      <HeaderRow>
        <Svg w={14} box="0 0 14 14" sw={1.300}><path d="M4.500.8H3A2.200 2.200 0 0 0 .8 3v1.500M9.500.8H11A2.200 2.200 0 0 1 13.200 3v1.500M13.200 9.500V11a2.200 2.200 0 0 1-2.200 2.200H9.500M4.500 13.200H3A2.200 2.200 0 0 1 .8 11V9.500M7 6.800v.4" /></Svg>
        <Fit w={90} $s={12.500} $ml={11}>25632e3c9e09</Fit>
        <Gap $w={16} /><Caret />
        <Gap $w={22} /><Gear w={13} />
        <Trouble><Sparkle w={11} /><Fit w={63} $s={11} $sans>Troubleshoot</Fit></Trouble>
        <TimeBox>
          <Playing><Svg w={11} box="0 0 11 11" fill="#fff"><path d="M0 0l11 5.500L0 11z" /></Svg><Fit w={36} $s={11}>Playing</Fit></Playing>
          <Gap $w={9} /><Caret />
          <Fit w={53} $s={9.500} $ml={12}>03/10/2025</Fit>
          <Fit w={3} $s={9} $ml={2}>•</Fit>
          <Fit w={25} $s={9.500} $b={500} $ml={2} $c="#00c04c">14:34</Fit>
          <Gap $w={5} />
          <Svg w={11} h={8} box="0 0 11 8" sw={1.100}><path d="M.6 4h9.600M7.200 1l3 3-3 3" stroke="#00c04c" /></Svg>
          <Fit w={25} $s={9.500} $b={500} $ml={4} $c="#00c04c">14:49</Fit>
          <Fit w={3} $s={9} $ml={3}>•</Fit>
          <Fit w={16} $s={9.500} $ml={4}>last</Fit>
          <Fit w={27} $s={9.500} $ml={6}>15min</Fit>
        </TimeBox>
        <HLine $ml={10} />
        <Gap $w={18} />
        <Svg w={15} box="0 0 15 15" fill="#829494"><rect width="15" height="6.500" rx=".5" /><rect y="8" width="15" height="6.500" rx=".5" /><circle cx="3" cy="3.200" r="1.300" fill="#1e2424" /><circle cx="3" cy="11.200" r="1.300" fill="#1e2424" /></Svg>
        <Fit w={18} $s={10} $ml={10} $c="#00ab44">Live</Fit>
        <LiveCount><Label $s={10} $b={500}>1</Label></LiveCount>
      </HeaderRow>
      <TabRow>
        {mainTabs.map(m => (
          <NavTab key={m.t} $w={m.w} $pl={m.pl} $c={m.c}>
            <IconCell $w={m.iw}>{m.i}</IconCell>
            <Fit w={m.tw} $s={9.800} $b={m.c ? 500 : 400}>{m.t}</Fit>
            {m.badge && <Badges />}
          </NavTab>
        ))}
        <NavTab $w={16} $pl={7}><HLine $h={21} /></NavTab>
        <NavTab $w={154} $pl={8.500}><NodeIcon /><Fit w={108} $s={9.800}>local-custom-dashboard</Fit><Grip /></NavTab>
        <NavTab $w={206} $pl={6.500} $on><NodeIcon /><Fit w={121} $s={9.800}>25632e3c9e09 (172.17.0.2)</Fit><Badges ml={-1} /><Grip /></NavTab>
      </TabRow>
      <SubRow>
        <Fit w={123} $s={9.500} $b={700} $c="#b6c2c2">25632e3c9e09 (172.17.0.2)</Fit>
        <Gap $w={9} /><Label $c="#e4eaea"><Info w={14} sw={1.400} /></Label>
        <HLine $ml={10} $h={18} />
        <Gap $w={3} />
        <Counts $w={63}>
          <Count $w={29} $bg="#2b3333" $z={2}><Label $c="#829494"><Bell w={12} /></Label></Count>
          <Count $w={24} $bg="#2d0308" $ml={-6} $z={1}><Label $s={10} $b={600}>0</Label></Count>
          <Count $w={12}><Label $s={10} $b={600}>0</Label></Count>
        </Counts>
        <HLine $ml={4} $h={18} />
        <Gap $w={7} /><Label $c="#b6c2c2"><Gear w={13} /></Label>
        <HLine $ml={7} $h={18} />
        <Pill $w={36} $ml={3}><Fit w={20} $s={11}>Live</Fit></Pill>
        <Pill $w={66} $ml={4}><Svg w={9} box="0 0 9 9" sw={1}><rect x=".5" y="1" width="8" height="7" rx="1.500" /><path d="M3 3v3M4.500 3v3M6 3v3" /></Svg><Fit w={33} $s={11}>docker</Fit></Pill>
        <HLine $ml={14} $h={21} />
        <Gap $w={7} />
        <SubTabs>
          {subTabs.map(m => (
            <NavTab key={m.t} $w={m.w} $pl={m.pl} $on={m.on} $sub>
              <IconCell $w={m.iw}>{m.i}</IconCell>
              <Fit w={m.tw} $s={9.800}>{m.t}</Fit>
            </NavTab>
          ))}
        </SubTabs>
      </SubRow>
    </>
  );
}

const dims = [
  { n: 'min', nw: 17, v: '0.054', vw: 32, c: '#4cbb00' },
  { n: 'max', nw: 19, v: '1.04', vw: 25, c: '#ff0000' },
  { n: 'average', nw: 36, v: '0.147', vw: 32, c: '#5436d0' },
];
const times = Array.from({ length: 15 }, (_, i) => `14:${35 + i}:00`);
const Double = () => <Svg w={6} h={6} box="0 0 6 6" sw={1}><path d="M.7.7L3 2.200 5.300.7M.7 3.300L3 4.800l2.300-1.500" /></Svg>;

function MainPane() {
  return (
    <LeftPane>
      <Content>
        <SectionHead $h={31} $c="#00ab44" $pl={5} $pr={6} $pt={1}><ChartIcon /><Fit w={42} $s={11} $b={700} $ml={3}>Netdata</Fit><Push /><Heart /></SectionHead>
        <ChartCard>
          <PlotRow>
            <AxisTitle><VText>milliseconds per second</VText></AxisTitle>
            <YAxis><Label $s={9.500}>1</Label><Label $s={9.500}>0.5</Label><Label $s={9.500}>0</Label></YAxis>
            <PlotCol>
              <Plot />
              <XAxis>{times.map(t => <Fit key={t} w={35} $s={9}>{t}</Fit>)}</XAxis>
            </PlotCol>
          </PlotRow>
          <LegendRow>
            <Svg w={10} h={22} box="0 0 10 22" sw={1.200}><path d="M5 7v9M1.800 13L5 16.200 8.200 13" /></Svg>
            <Gap $w={17} />
            {dims.map(d => (
              <Dim key={d.n} $c={d.c}>
                <DimName><Fit w={d.nw} $s={9.500}>{d.n}</Fit></DimName>
                <DimBar />
                <DimVal><Fit w={d.vw} $s={12} $b={700}>{d.v}</Fit><Fit w={19} $s={9.500} $c="#6f7f7f">ms/s</Fit></DimVal>
              </Dim>
            ))}
            <Latest><Fit w={111} $s={7.500}>{'Latest:  Fri, 03 Oct 2025 • 14:49:36'}</Fit></Latest>
          </LegendRow>
          <Expand><Double /><Fit w={104} $s={9.500}>Expand - Chart Analysis</Fit><Double /><Push /><Corner /></Expand>
        </ChartCard>
        <SectionHead $h={38} $c="#b0bebe" $pr={4}><Fit w={70} $s={17.500} $b={700} $mb={2}>Netdata</Fit><Push /><Label $c="#00ab44"><Heart /></Label></SectionHead>
        <Gauges>
          <Gauge title="Average CPU usage per Agent" tw={134} sw={1} value="9.46" unit="ms/s" vw={66} uw={36} color="#a40096" />
          <Gauge title="Average memory usage per Agent" tw={152} sw={2} value="25.75" unit="MiB" vw={84} uw={30} color="#e30500" full />
        </Gauges>
        <NextTitle><Label $s={14} $b={700}>Cloud</Label></NextTitle>
      </Content>
      <ScrollTrack />
      <BottomBand />
    </LeftPane>
  );
}

function RightPane() {
  return (
    <Panel>
      <PanelHead><NodeIcon w={13} /><Fit w={57} $s={9.500} $b={700} $ml={7}>Single Node</Fit><Push /><Svg w={12} h={10} box="0 0 12 10" sw={1.100}><path d="M.8.8v8.400M3 5h8M8.200 2L11 5 8.200 8" stroke="#829494" /></Svg></PanelHead>
      <SwitchRow $h={33} $line><Toggle /><Fit w={95} $s={11.500} $ml={7}>Metric Correlations</Fit></SwitchRow>
      <PanelTabs>
        <PanelTab $on><Svg w={15} box="0 0 15 15" sw={1.200}><path d="M6 6.500H3.500L2.800 5.500H.8v8.200h13V8.500" /><circle cx="10" cy="4" r="3.200" /><circle cx="10" cy="4" r="1" /><path d="M1.500 10l5-3" /></Svg></PanelTab>
        <PanelTab $w={60}><Bell w={15} sw={1} /></PanelTab>
        <PanelTab><Info w={14} sw={1.100} /></PanelTab>
      </PanelTabs>
      <Search><Fit w={67} $s={11} $sans>Search charts</Fit></Search>
      <CountRow><Fit w={129} $s={9.500}>Showing <b>220</b> of total <b>220</b> charts</Fit><Fit w={67} $s={9.500} $c="#00ab44">Add more charts</Fit></CountRow>
      <SwitchRow $h={42} $pt={2}><Toggle /><Fit w={80} $s={11.500} $ml={7}>Anomaly Rate %</Fit></SwitchRow>
      <Menu>
        <MenuList>
          <Outer>
            <Inner>
              <Item $h={21}><Fit w={21} $s={11}>Disk</Fit></Item>
              <Item $h={22}><Fit w={26} $s={11}>Tasks</Fit></Item>
              <Item><Fit w={18} $s={11}>FDs</Fit></Item>
              <Item><Fit w={36} $s={11}>Uptime</Fit></Item>
            </Inner>
            <Item><Fit w={29} $s={11} $b={700}>Users</Fit></Item>
            <Item><Fit w={37} $s={11} $b={700}>Groups</Fit></Item>
            <Item><Fit w={17} $s={11} $b={700}>IPC</Fit></Item>
          </Outer>
          <Group $h={50} $pt={3}>
            <Item $pl={28} $h={22}><Svg w={13} h={12} box="0 0 13 12" fill="#b6c2c2"><path d="M6.500 11.500L1.500 6.500C-1 3.500 1 .5 3.500.5 5 .5 6 1.500 6.500 2.500 7 1.500 8 .5 9.500.5c2.500 0 4.500 3 2 6z" /><path d="M0 6h4l1.200-2.500L7 8l1.200-2H13" stroke="#0b0f10" strokeWidth="1.100" fill="none" /></Svg><Fit w={50} $s={11} $b={700}>Synthetic</Fit></Item>
            <Item $pl={39.500} $h={22}><Fit w={70} $s={11}>CPU Idle Jitter</Fit></Item>
          </Group>
          <Group $h={71} $pt={3} $bg="#151919">
            <Item $pl={10} $h={22} $c="#00ab44"><Chevron><Svg w={7} h={9} box="0 0 7 9" sw={1.500}><path d="M1.500 1L5.500 4.500l-4 3.500" /></Svg></Chevron><ChartIcon /><Fit w={42} $s={11} $b={700}>Netdata</Fit></Item>
            <Item $pl={39.500} $h={22}><Fit w={31} $s={11} $b={700}>Agent</Fit></Item>
            <Item $pl={39.500} $h={22}><Fit w={38} $s={11} $b={700}>Plugins</Fit></Item>
          </Group>
        </MenuList>
        <MenuScroll />
      </Menu>
    </Panel>
  );
}

function DockBar() {
  return (
    <Dock>
      <DockItem><svg width="32" height="32" viewBox="0 0 32 32"><defs><linearGradient id="fx" x1=".8" y1="0" x2=".3" y2="1"><stop offset="0" stopColor="#ffe23f" /><stop offset=".45" stopColor="#ff8a1e" /><stop offset=".8" stopColor="#ff3750" /><stop offset="1" stopColor="#e31587" /></linearGradient></defs><path d="M20 1c1 3 5 5 7 8l2-1c2 4 3 9 1 13-2 6-8 10-14 10C8 31 1 25 1 17c0-3 1-6 2-8l1-4c1 2 2 2 3 3 2-1 5-1 7 0 1-3 3-6 6-7z" fill="url(#fx)" /><circle cx="16" cy="17" r="6.500" fill="#7542e5" /><path d="M6 12c4-1 6 1 10 1-1 3-5 2-6 5s4 6 8 5c-5 4-13 1-13-6 0-2 0-3 1-5z" fill="#ff9a20" /></svg></DockItem>
      <DockItem $run><svg width="28" height="28" viewBox="0 0 28 28"><rect width="28" height="28" rx="3" fill="#a59a87" /><rect x="1" y="1" width="26" height="25" rx="2.500" fill="#989080" /><path d="M4 7a2 2 0 0 1 2-2h6l2 2h8a2 2 0 0 1 2 2v12a2 2 0 0 1-2 2H6a2 2 0 0 1-2-2z" fill="#f7f5f2" /><path d="M5 7a1.500 1.500 0 0 1 1.500-1.500H12L14 8H5z" fill="#ddd8cf" /></svg></DockItem>
      <DockItem><svg width="26" height="30" viewBox="0 0 26 30"><rect x="1" y="1" width="24" height="28" rx="2.500" fill="#1b82bd" /><path d="M3 3h12l8 9v15H3z" fill="#fff" /><path d="M17 1h8v8z" fill="#0d4f7c" /><path d="M5 13h7M5 16h7M5 19h7M5 22h16M5 25h12" stroke="#135f96" strokeWidth="1.300" /><rect x="13" y="12.500" width="9" height="6.500" fill="#2e8ac4" /><path d="M14 18.500l3-3 4 3z" fill="#0a3d62" /></svg></DockItem>
      <DockItem $run><svg width="30" height="26" viewBox="0 0 30 26"><rect x=".5" y=".5" width="29" height="25" rx="2.500" fill="#4a4a4a" stroke="#6a6a6a" /><text x="4" y="9.500" fontFamily="DejaVu Sans Mono, monospace" fontSize="8" fontWeight="700" fill="#fff">&gt;_</text></svg></DockItem>
      <DockItem><svg width="28" height="28" viewBox="0 0 28 28"><defs><linearGradient id="tx" x1=".2" y1="0" x2=".8" y2="1"><stop offset="0" stopColor="#14143c" /><stop offset=".5" stopColor="#252173" /><stop offset="1" stopColor="#4b3fff" /></linearGradient></defs><rect x=".5" y=".5" width="27" height="27" fill="url(#tx)" stroke="#4b1470" /><path d="M2 2l7 5 2 4-6-3zM8 9l4 2-5 1z" fill="#050510" /><path d="M6 9l5-1-2 3z" fill="#9bd820" /><g fontFamily="Liberation Serif, serif" fill="#f5dc28"><text x="6" y="23" fontSize="11">T</text><text x="12" y="27" fontSize="11">E</text><text x="18.500" y="23" fontSize="11">X</text></g></svg></DockItem>
      <DockItem><svg width="24" height="26" viewBox="0 0 24 26"><ellipse cx="12" cy="22.500" rx="6.500" ry="3" fill="#c9c9c9" /><path d="M2 1l20 2-2 17L1 16z" fill="#d6d6d6" /><path d="M3.500 2.500l17 2-1.500 13L2.500 14.500z" fill="#1a2bb8" /><path d="M3.500 2.500l6 .8-4 11.800-3-.6z" fill="#0a1580" /><rect x="8" y="4" width="7" height="12" rx="1" fill="#d9dce8" /><path d="M13 4h2v12h-2z" fill="#9aa0b4" /></svg></DockItem>
      <DockItem $on $run><svg width="32" height="32" viewBox="-16 -16 32 32"><circle r="16" fill="#34a04f" /><path d="M-13.900-8A16 16 0 0 1 13.900-8H0A8 8 0 0 0-6.900 4z" fill="#e33b2e" /><path d="M13.900-8A16 16 0 0 1 0 16L6.900 4A8 8 0 0 0 0-8z" fill="#fcc01e" /><circle r="8" fill="#fff" /><circle r="6.300" fill="#1a73e8" /></svg></DockItem>
      <Push />
      <svg width="20" height="20" viewBox="0 0 20 20" fill="#f2f2f2">{[2, 10, 18].map(y => [2, 10, 18].map(x => <rect key={x + '-' + y} x={x - 2} y={y - 2} width="4" height="4" rx="1.200" />))}</svg>
      <Gap $w={10} />
    </Dock>
  );
}

export default function App() {
  return (
    <Screen>
      <Global />
      <TopBar>
        <Fit w={63} $s={13.500}>Activities</Fit>
        <Gap $w={34} />
        <Svg w={16} box="0 0 16 16" fill="#8e8e8e"><circle cx="8" cy="8" r="8" /><path d="M1 4a8 8 0 0 1 14 0H8z" fill="#6a6a6a" /><path d="M15 4a8 8 0 0 1-7 12l3.500-6z" fill="#c6c6c6" /><circle cx="8" cy="8" r="4" fill="#f0f0f0" /><circle cx="8" cy="8" r="3" fill="#777" /></Svg>
        <Fit w={104} $s={13.500} $ml={6}>Google Chrome</Fit>
        <ArrowDown $ml={5} />
        <Gap $w={384} />
        <Fit w={35} $s={13.500}>Oct 3</Fit>
        <Fit w={53} $s={13.500} $ml={10}>2:49 PM</Fit>
        <Dot />
        <Gap $w={506} />
        <Svg w={16} h={13} box="0 0 16 13" fill="#f2f2f2"><path d="M0 3.500C4.500-1 11.500-1 16 3.500L8 13z" opacity=".95" /><path d="M1.500 3.800C5.500.5 10.500.5 14.500 3.800L13 5.500C10 3 6 3 3 5.500z" fill="#1d1d1d" /></Svg>
        <Gap $w={13} />
        <Svg w={17} h={15} box="0 0 17 15" fill="#f2f2f2"><path d="M0 5h3.500L8 1v13l-4.500-4H0z" /><path d="M9.800 4.500c1.500 1.500 1.500 4.500 0 6M11.500 2.500c3 2.500 3 7.500 0 10" stroke="#f2f2f2" strokeWidth="1.200" fill="none" /><path d="M13 .8c4 3.500 4 10 0 13.500" stroke="#8a8a8a" strokeWidth="1" fill="none" /></Svg>
        <Gap $w={13} />
        <Svg w={10} h={15} box="0 0 10 15" sw={1.200}><rect x=".6" y="1.800" width="8.800" height="12.500" rx="1" /><path d="M3.500.6h3" /><path d="M2.500 9h5v3.500h-5z" fill="#f2f2f2" /></Svg>
        <ArrowDown $ml={13} />
      </TopBar>
      <Browser />
      <Page>
        <Sidebar />
        <Body>
          <Header />
          <Main>
            <MainPane />
            <RightPane />
          </Main>
        </Body>
      </Page>
      <DockBar />
    </Screen>
  );
}
